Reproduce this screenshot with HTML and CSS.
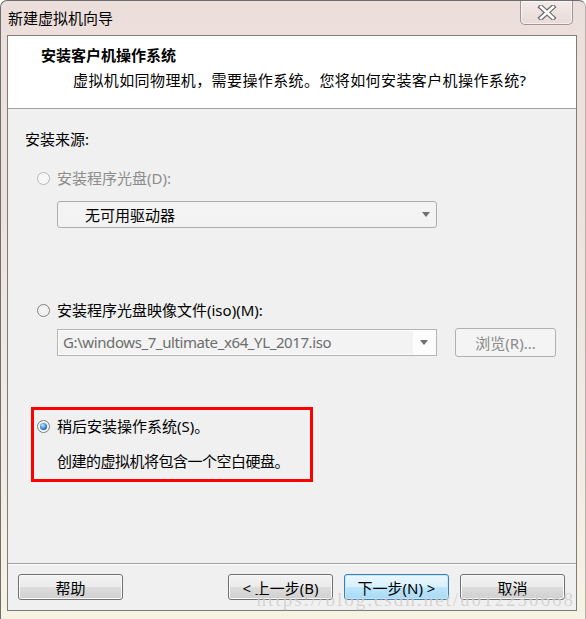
FILE: index.html
```html
<!DOCTYPE html>
<html lang="zh-CN">
<head>
    <meta charset="UTF-8">
    <meta name="viewport" content="width=device-width, initial-scale=1.0">
    <title>新建虚拟机向导</title>
    <link rel="stylesheet" href="styles.css">
</head>
<body>
    <div class="window">
        <div class="titlebar">
            <span class="title">新建虚拟机向导</span>
            <div class="close">
                <svg width="20" height="15" viewBox="0 0 20 15">
                    <path d="M4 2 L16 13 M16 2 L4 13" stroke="#6b6b6b" stroke-width="5" stroke-linecap="square"/>
                    <path d="M4 2 L16 13 M16 2 L4 13" stroke="#ffffff" stroke-width="2.6" stroke-linecap="square"/>
                </svg>
            </div>
        </div>

        <div class="client">
            <div class="header">
                <h1>安装客户机操作系统</h1>
                <p>虚拟机如同物理机，需要操作系统。您将如何安装客户机操作系统?</p>
            </div>

            <div class="body">
                <div class="source-label">安装来源:</div>

                <div class="option disabled">
                    <span class="radio"></span>
                    <span>安装程序光盘(D):</span>
                </div>
                <div class="select">
                    <span class="select-text">无可用驱动器</span>
                    <span class="arrow"></span>
                </div>

                <div class="option option-iso">
                    <span class="radio"></span>
                    <span>安装程序光盘映像文件(iso)(M):</span>
                </div>
                <div class="iso-row">
                    <div class="combo">
                        <span class="combo-field">G:\windows_7_ultimate_x64_YL_2017.iso</span>
                        <span class="combo-btn"><span class="arrow"></span></span>
                    </div>
                    <div class="btn btn-disabled browse">浏览(R)...</div>
                </div>

                <div class="later">
                    <div class="option">
                        <span class="radio checked"></span>
                        <span>稍后安装操作系统(S)。</span>
                    </div>
                    <div class="later-note">创建的虚拟机将包含一个空白硬盘。</div>
                </div>
            </div>

            <div class="footer">
                <div class="btn">帮助</div>
                <div class="nav">
                    <div class="btn">&lt; 上一步(B)</div>
                    <div class="btn btn-default">下一步(N) &gt;</div>
                    <div class="btn">取消</div>
                </div>
            </div>
        </div>

        <div class="watermark">https://blog.csdn.net/u012230668</div>
    </div>
</body>
</html>
```

FILE: styles.css
```css
* {
    box-sizing: border-box;
}
body {
    margin: 0;
    font-family: "Noto Sans", "Noto Sans CJK SC", sans-serif;
    font-size: 15px;
    color: #000;
}
.window {
    position: relative;
    width: 586px;
    height: 619px;
    padding: 0 8px 8px 6px;
    display: flex;
    flex-direction: column;
    overflow: hidden;
    border: 1px solid #6e6e6e;
    border-bottom: none;
    border-right-color: #b8b0a8;
    border-radius: 7px 7px 0 0;
    background: linear-gradient(to bottom, #ecdedb 0, #eee2df 35%, #f3ece3 80%, #f7f3e4 100%);
}
.titlebar {
    height: 34px;
    display: flex;
    align-items: center;
    justify-content: space-between;
}
.title {
    padding-left: 1px;
    line-height: 20px;
}
.close {
    align-self: flex-start;
    width: 53px;
    height: 24px;
    margin-right: 4px;
    display: flex;
    align-items: center;
    justify-content: center;
    border: 1px solid #a09390;
    border-top: none;
    border-radius: 0 0 5px 5px;
    background: linear-gradient(to bottom, #f3eae8, #e8dad7);
    box-shadow: inset 0 0 0 1px rgba(255, 255, 255, 0.6);
}
.client {
    flex: 1;
    display: flex;
    flex-direction: column;
    border: 1px solid #7c7c7c;
    background: #f0f0f0;
}
.header {
    height: 73px;
    padding: 9px 0 0 33px;
    background: #fff;
    border-bottom: 1px solid #a0a0a0;
}
.header h1 {
    margin: 0;
    font-size: 15px;
    font-weight: bold;
    line-height: 20px;
}
.header p {
    margin: 5px 0 0 32px;
    line-height: 20px;
    letter-spacing: 0.4px;
}
.body {
    flex: 1;
    padding: 20px 0 0 17px;
}
.source-label {
    line-height: 20px;
}
.option {
    display: flex;
    align-items: center;
    gap: 7px;
    line-height: 20px;
    margin: 19px 0 0 12px;
}
.option.disabled {
    color: #8c8c8c;
}
.option-iso {
    margin-top: 72px;
}
.radio {
    position: relative;
    width: 13px;
    height: 13px;
    flex: none;
    border-radius: 50%;
    border: 1px solid #7d7d7d;
    background: radial-gradient(circle at 50% 50%, #f4f4f4 0, #f4f4f4 35%, #c9c9c9 100%);
    box-shadow: inset 0 0 0 1px #fdfdfd;
}
.disabled .radio {
    border-color: #b4b4b4;
    background: radial-gradient(circle at 50% 50%, #f7f7f7 0, #f7f7f7 40%, #dcdcdc 100%);
}
.radio.checked::after {
    content: "";
    position: absolute;
    left: 2px;
    top: 2px;
    width: 7px;
    height: 7px;
    border-radius: 50%;
    background: radial-gradient(circle at 40% 35%, #d2f0ff 0, #58a8e8 35%, #1d5fa8 75%, #163f73 100%);
}
.select {
    width: 380px;
    height: 27px;
    margin: 13px 0 0 32px;
    display: flex;
    align-items: center;
    justify-content: space-between;
    padding: 0 6px 0 27px;
    border: 1px solid #adadad;
    border-radius: 3px;
    background: linear-gradient(to bottom, #f4f4f4, #f2f2f2);
}
.arrow {
    width: 0;
    height: 0;
    border-left: 4px solid transparent;
    border-right: 4px solid transparent;
    border-top: 5px solid #6f6f6f;
}
.iso-row {
    display: flex;
    align-items: center;
    gap: 18px;
    margin: 8px 0 0 32px;
    height: 29px;
}
.combo {
    width: 380px;
    height: 27px;
    display: flex;
    padding: 1px;
    border: 1px solid #b5b5b5;
    background: #fcfcfc;
}
.combo-field {
    flex: 1;
    padding-left: 4px;
    line-height: 23px;
    letter-spacing: -0.4px;
    color: #6d6d6d;
    background: #f3f3f3;
}
.combo-btn {
    width: 22px;
    display: flex;
    align-items: center;
    justify-content: center;
}
.btn {
    width: 105px;
    height: 26px;
    display: flex;
    align-items: center;
    justify-content: center;
    border: 1px solid #707070;
    border-radius: 3px;
    background: linear-gradient(to bottom, #f2f2f2 0, #ebebeb 50%, #dddddd 50%, #cfcfcf 100%);
    box-shadow: inset 0 0 0 1px #fbfbfb;
}
.btn-disabled {
    color: #8a8a8a;
    border-color: #adb2b5;
    background: #f4f4f4;
    box-shadow: none;
}
.browse {
    width: 101px;
    height: 29px;
}
.btn-default {
    border-color: #3c7fb1;
    background: linear-gradient(to bottom, #eaf6fd 0, #d9f0fc 50%, #bee6fd 50%, #a7d9f5 100%);
    box-shadow: inset 0 0 0 1px #c4e8fa;
}
.later {
    width: 282px;
    margin: 50px 0 0 6px;
    padding: 6px 0 8px 3px;
    border: 3px solid #ff0000;
}
.later .option {
    margin: 0;
}
.later-note {
    margin-top: 15px;
    padding-left: 20px;
    line-height: 20px;
    letter-spacing: -0.5px;
}
.footer {
    display: flex;
    justify-content: space-between;
    padding: 10px 11px 10px 10px;
    border-top: 1px solid #a0a0a0;
    box-shadow: inset 0 1px 0 #ffffff;
}
.nav {
    display: flex;
    gap: 11px;
}
.watermark {
    position: absolute;
    right: 10px;
    bottom: 8px;
    font-family: "Liberation Serif", serif;
    font-size: 19px;
    letter-spacing: 2px;
    color: rgba(170, 170, 170, 0.5);
    text-shadow: 0 0 1px rgba(255, 255, 255, 0.8);
    pointer-events: none;
}
```
